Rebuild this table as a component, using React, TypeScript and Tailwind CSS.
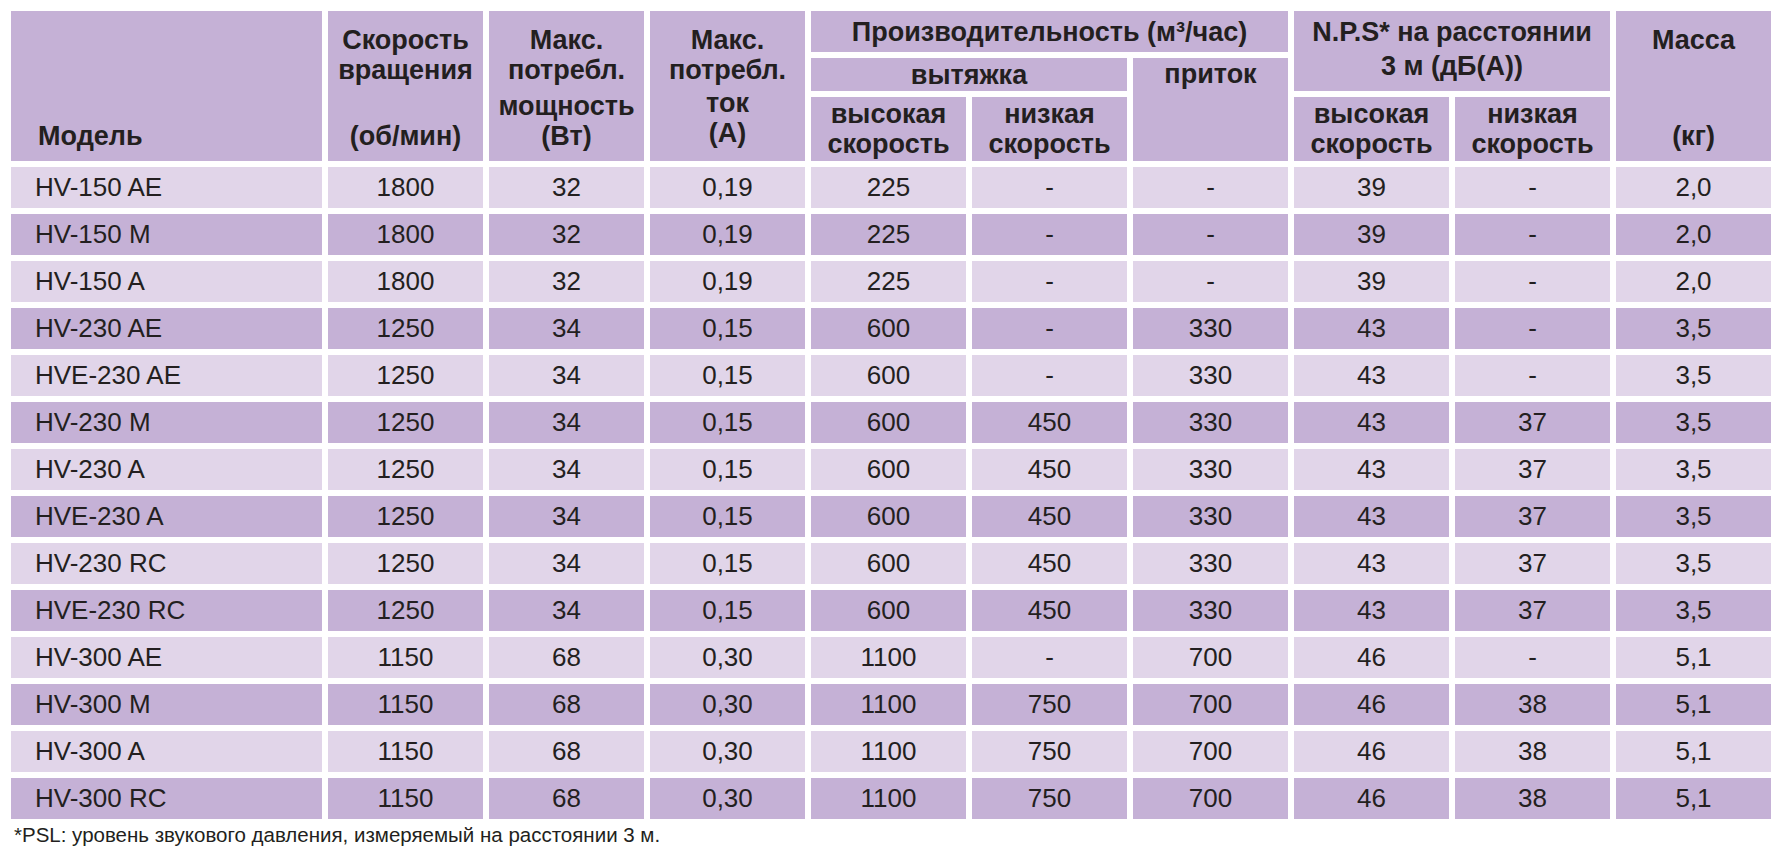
import React from "react"

// spec table: model, rpm, power W, current A, extract high, extract low, supply, NPS high, NPS low, mass
const rows: string[][] = [
  ["HV-150 AE", "1800", "32", "0,19", "225", "-", "-", "39", "-", "2,0"],
  ["HV-150 M", "1800", "32", "0,19", "225", "-", "-", "39", "-", "2,0"],
  ["HV-150 A", "1800", "32", "0,19", "225", "-", "-", "39", "-", "2,0"],
  ["HV-230 AE", "1250", "34", "0,15", "600", "-", "330", "43", "-", "3,5"],
  ["HVE-230 AE", "1250", "34", "0,15", "600", "-", "330", "43", "-", "3,5"],
  ["HV-230 M", "1250", "34", "0,15", "600", "450", "330", "43", "37", "3,5"],
  ["HV-230 A", "1250", "34", "0,15", "600", "450", "330", "43", "37", "3,5"],
  ["HVE-230 A", "1250", "34", "0,15", "600", "450", "330", "43", "37", "3,5"],
  ["HV-230 RC", "1250", "34", "0,15", "600", "450", "330", "43", "37", "3,5"],
  ["HVE-230 RC", "1250", "34", "0,15", "600", "450", "330", "43", "37", "3,5"],
  ["HV-300 AE", "1150", "68", "0,30", "1100", "-", "700", "46", "-", "5,1"],
  ["HV-300 M", "1150", "68", "0,30", "1100", "750", "700", "46", "38", "5,1"],
  ["HV-300 A", "1150", "68", "0,30", "1100", "750", "700", "46", "38", "5,1"],
  ["HV-300 RC", "1150", "68", "0,30", "1100", "750", "700", "46", "38", "5,1"],
]

const head = "bg-[#c5b1d6] font-bold text-[27px] leading-[30px] text-[#231f20]"

function TallHead({ top, bottom, className = "" }: { top: string[]; bottom: string[]; className?: string }) {
  return (
    <div className={`${head} row-span-3 flex flex-col justify-between items-center text-center pt-[14px] pb-[10px] ${className}`}>
      <div>
        {top.map((t) => (
          <div key={t}>{t}</div>
        ))}
      </div>
      <div>
        {bottom.map((t) => (
          <div key={t}>{t}</div>
        ))}
      </div>
    </div>
  )
}

export default function App() {
  return (
    <div className="bg-white w-[1779px] h-[858px] pt-[11px] pl-[11px]" style={{ fontFamily: '"Liberation Sans", Arial, sans-serif' }}>
      <div className="grid grid-cols-[311px_repeat(9,155px)] grid-rows-[41px_33px_64px] auto-rows-[41px] gap-[6px]">
        <div className={`${head} col-start-1 row-start-1 row-span-3 flex items-end pl-[27px] pb-[10px]`}>Модель</div>
        <TallHead className="col-start-2 row-start-1" top={["Скорость", "вращения"]} bottom={["(об/мин)"]} />
        <TallHead className="col-start-3 row-start-1" top={["Макс.", "потребл."]} bottom={["мощность", "(Вт)"]} />
        <TallHead className="col-start-4 row-start-1 pb-[13px]" top={["Макс.", "потребл."]} bottom={["ток", "(А)"]} />
        <div className={`${head} col-start-5 col-span-3 row-start-1 flex items-center justify-center`}>
          Производительность (м³/час)
        </div>
        <div className={`${head} col-start-8 col-span-2 row-start-1 row-span-2 text-center pt-[4px] leading-[34px]`}>
          <div>N.P.S* на расстоянии</div>
          <div>3 м (дБ(А))</div>
        </div>
        <TallHead className="col-start-10 row-start-1" top={["Масса"]} bottom={["(кг)"]} />
        <div className={`${head} col-start-5 col-span-2 row-start-2 flex items-center justify-center`}>вытяжка</div>
        <div className={`${head} col-start-7 row-start-2 row-span-2 text-center leading-[33px]`}>приток</div>
        <div className={`${head} col-start-5 row-start-3 flex flex-col items-center justify-center leading-[29px]`}>
          <div>высокая</div>
          <div>скорость</div>
        </div>
        <div className={`${head} col-start-6 row-start-3 flex flex-col items-center justify-center leading-[29px]`}>
          <div>низкая</div>
          <div>скорость</div>
        </div>
        <div className={`${head} col-start-8 row-start-3 flex flex-col items-center justify-center leading-[29px]`}>
          <div>высокая</div>
          <div>скорость</div>
        </div>
        <div className={`${head} col-start-9 row-start-3 flex flex-col items-center justify-center leading-[29px]`}>
          <div>низкая</div>
          <div>скорость</div>
        </div>

        {rows.map((r, i) =>
          r.map((v, j) => (
            <div
              key={`${i}-${j}`}
              className={`${i % 2 === 0 ? "bg-[#e1d5e9]" : "bg-[#c5b1d6]"} text-[26px] text-[#231f20] flex items-center ${
                j === 0 ? "pl-[24px]" : "justify-center"
              }`}
            >
              {v}
            </div>
          ))
        )}
      </div>
      <div className="mt-[4px] pl-[3px] text-[20.5px] leading-[24px] text-[#231f20]">
        *PSL: уровень звукового давления, измеряемый на расстоянии 3 м.
      </div>
    </div>
  )
}
